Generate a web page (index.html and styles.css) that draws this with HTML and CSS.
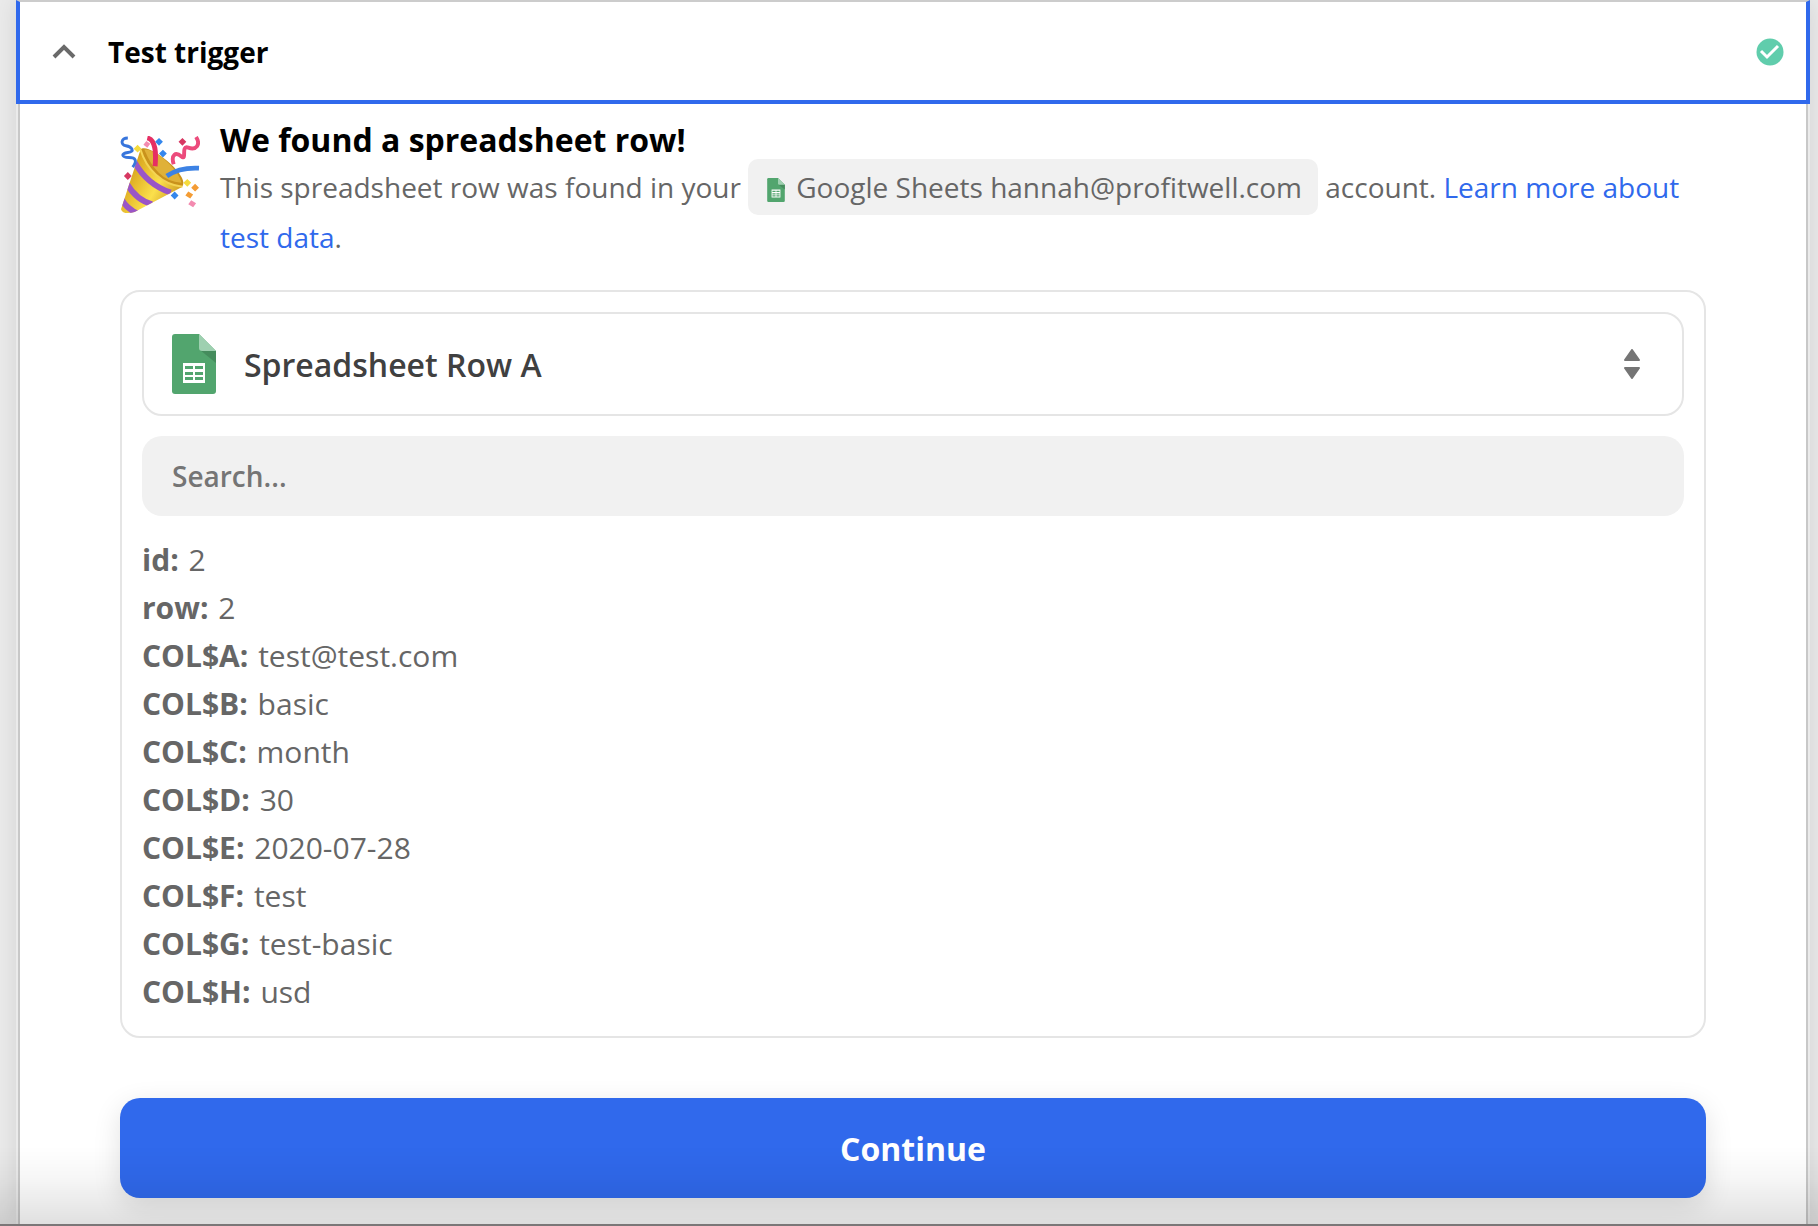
FILE: index.html
```html
<!DOCTYPE html>
<html lang="en">
<head>
    <meta charset="UTF-8">
    <meta name="viewport" content="width=device-width, initial-scale=1.0">
    <title>Test trigger</title>
    <link rel="stylesheet" href="styles.css">
</head>
<body>
    <svg class="sprite" aria-hidden="true">
        <symbol id="sheets" viewBox="0 0 44 60">
            <path fill="#52a56e" d="M3 0h24l17 17v40a3 3 0 0 1-3 3H3a3 3 0 0 1-3-3V3a3 3 0 0 1 3-3z"/>
            <path fill="#458c5d" d="M28 16l16 13V17z"/>
            <path fill="#9ed0b0" d="M27 0l17 17H30a3 3 0 0 1-3-3z"/>
            <path fill="#fff" fill-rule="evenodd" d="M11 29h22v20H11zM13 32v3h8v-3zM23 32v3h8v-3zM13 38v3h8v-3zM23 38v3h8v-3zM13 43v3h8v-3zM23 43v3h8v-3z"/>
        </symbol>
    </svg>

    <main class="step">
        <button type="button" class="step-header" aria-expanded="true">
            <svg class="chevron" viewBox="0 0 24 16"><path d="M2 13L12 3l10 10"/></svg>
            <span class="step-title">Test trigger</span>
            <svg class="check" viewBox="0 0 28 28">
                <circle cx="14" cy="14" r="13.5" fill="#60cdac"/>
                <path d="M5 13l6 6L22 8" fill="none" stroke="#fff" stroke-width="3"/>
            </svg>
        </button>

        <div class="step-body">
            <section class="found">
                <svg class="party" viewBox="0 0 80 80">
                    <defs>
                        <linearGradient id="gold" x1="0" y1="0.2" x2="1" y2="0.8">
                            <stop offset="0" stop-color="#c98d10"/>
                            <stop offset="0.35" stop-color="#e8bd2f"/>
                            <stop offset="0.6" stop-color="#fbe04c"/>
                            <stop offset="1" stop-color="#c48a18"/>
                        </linearGradient>
                        <clipPath id="cone"><path d="M20 14C26 34 42 50 63 52L14 78Q2 81 0 75Z"/></clipPath>
                    </defs>
                    <path fill="#c9921c" d="M20 14C26 6 63 34 64 48Q64 54 57 53C40 49 24 35 20 14Z"/>
                    <path fill="#e0b138" d="M24 14C34 12 59 34 62 48Q48 47 39 38T24 14Z"/>
                    <path fill="url(#gold)" d="M20 14C26 34 42 50 63 52L14 78Q2 81 0 75Z"/>
                    <g clip-path="url(#cone)" fill="none" stroke="#9a55c7" stroke-width="6">
                        <path d="M14 27Q27 50 51 58"/>
                        <path d="M6 49Q16 66 32 70"/>
                        <path d="M0 64Q6 75 18 80"/>
                    </g>
                    <path d="M20 14C26 34 42 50 63 52" fill="none" stroke="#f4d454" stroke-width="2"/>
                    <path d="M7 2C0 2-1 9 5 10S15 16 7 17 1 22 8 22 17 25 12 32" fill="none" stroke="#3775dc" stroke-width="3"/>
                    <path d="M27 2C36 4 36 18 35 31" fill="none" stroke="#e62f64" stroke-width="5"/>
                    <path d="M77 1C82 9 77 15 69 12S68 26 62 21 51 19 54 29" fill="none" stroke="#ec4b7c" stroke-width="4"/>
                    <path d="M47 41Q60 32 80 33" fill="none" stroke="#3d82e4" stroke-width="5"/>
                    <path fill="#3487ed" d="M39 2l4 4-4 4-4-4zM43 14l4 4-4 4-4-4zM55 57l4 4-4 4-4-4z"/>
                    <path fill="#f38bb0" d="M26 5l4 3-3 4-4-3zM72 66l5 3-3 4-5-3z"/>
                    <path fill="#d73862" d="M63 2l4 4-4 4-4-4zM7 37l4 4-4 4-4-4z"/>
                    <path fill="#f5db3d" d="M17 9l4 4-4 4-4-4zM68 44l4 4-4 4-4-4z"/>
                    <path fill="#f49c34" d="M76 49l4 4-4 4-4-4zM69 57l5 3-3 4-5-3z"/>
                </svg>
                <div class="found-text">
                    <h2>We found a spreadsheet row!</h2>
                    <p>This spreadsheet row was found in your <span class="account"><svg class="account-icon"><use href="#sheets"/></svg>Google Sheets hannah@profitwell.com</span> account. <a href="#">Learn more about test data</a>.</p>
                </div>
            </section>

            <section class="sample">
                <div class="picker">
                    <svg class="picker-icon"><use href="#sheets"/></svg>
                    <select aria-label="Sample row">
                        <option>Spreadsheet Row A</option>
                    </select>
                    <svg class="arrows" viewBox="0 0 16 30">
                        <path d="M8 1L15 11H1zM8 29L1 19h14z"/>
                    </svg>
                </div>
                <input type="search" class="search" placeholder="Search..." aria-label="Search">
                <dl class="fields">
                    <div><dt>id:</dt> <dd>2</dd></div>
                    <div><dt>row:</dt> <dd>2</dd></div>
                    <div><dt>COL$A:</dt> <dd>test@test.com</dd></div>
                    <div><dt>COL$B:</dt> <dd>basic</dd></div>
                    <div><dt>COL$C:</dt> <dd>month</dd></div>
                    <div><dt>COL$D:</dt> <dd>30</dd></div>
                    <div><dt>COL$E:</dt> <dd>2020-07-28</dd></div>
                    <div><dt>COL$F:</dt> <dd>test</dd></div>
                    <div><dt>COL$G:</dt> <dd>test-basic</dd></div>
                    <div><dt>COL$H:</dt> <dd>usd</dd></div>
                </dl>
            </section>

            <button type="button" class="continue">Continue</button>
        </div>
    </main>
    <div class="fade"></div>
</body>
</html>
```

FILE: styles.css
```css
* {
    box-sizing: border-box;
}

body {
    margin: 0;
    height: 100vh;
    overflow: hidden;
    padding: 0 8px 0 16px;
    font-family: "Open Sans", sans-serif;
    font-size: 28px;
    color: #666;
    background-color: #ebebeb;
}

button, input, select {
    font-family: inherit;
}

.sprite {
    display: none;
}

.step {
    min-height: 100vh;
    box-shadow: 0 0 24px rgba(0, 0, 0, 0.1);
}

.step-header {
    display: flex;
    align-items: center;
    width: 100%;
    height: 104px;
    padding: 2px 22px 0 32px;
    border: 4px solid #3069ec;
    border-top: 2px solid #ccc;
    background-color: #fff;
    color: #000;
    text-align: left;
}

.chevron {
    width: 24px;
    height: 16px;
    fill: none;
    stroke: #6a6a6a;
    stroke-width: 4;
}

.step-title {
    flex: 1;
    margin-left: 32px;
    font-size: 28px;
    font-weight: bold;
}

.check {
    width: 28px;
    height: 28px;
}

.step-body {
    min-height: calc(100vh - 104px);
    margin: 0 2px;
    padding: 16px 100px 28px;
    border: 2px solid #c8c8c8;
    border-width: 0 2px;
    background-color: #fff;
}

.found {
    display: flex;
    gap: 20px;
    margin-bottom: 28px;
}

.party {
    flex: none;
    width: 80px;
    height: 78px;
    margin-top: 16px;
}

.found h2 {
    margin: 0 0 2px;
    font-size: 32px;
    line-height: 40px;
    color: #000;
}

.found p {
    margin: 0;
    line-height: 50px;
}

.found a {
    color: #3069ec;
    text-decoration: none;
}

.account {
    padding: 9px 16px 9px 18px;
    border-radius: 10px;
    background-color: #f1f1f1;
}

.account-icon {
    width: 20px;
    height: 24px;
    margin-right: 10px;
    vertical-align: -4px;
}

.sample {
    display: flex;
    flex-direction: column;
    gap: 20px;
    margin-bottom: 60px;
    padding: 20px;
    border: 2px solid #e5e5e5;
    border-radius: 20px;
}

.picker {
    display: flex;
    align-items: center;
    height: 104px;
    padding: 0 42px 0 28px;
    border: 2px solid #e5e5e5;
    border-radius: 20px;
}

.picker-icon {
    width: 44px;
    height: 60px;
}

.picker select {
    flex: 1;
    height: 100%;
    padding: 0 28px;
    border: none;
    background: none;
    color: #404040;
    font-size: 32px;
    font-weight: 600;
    appearance: none;
}

.arrows {
    width: 16px;
    height: 30px;
    fill: #757575;
    stroke: #757575;
    stroke-width: 2;
    stroke-linejoin: round;
}

.search {
    height: 80px;
    padding: 0 30px;
    border: none;
    border-radius: 20px;
    background-color: #f1f1f1;
    font-size: 28px;
    font-weight: 600;
}

.search::placeholder {
    color: #757575;
}

.fields {
    margin: 0;
    font-size: 30px;
    line-height: 48px;
}

.fields dt, .fields dd {
    display: inline;
    margin: 0;
}

.fields dt {
    margin-right: 2px;
    font-weight: bold;
}

.continue {
    display: block;
    width: 100%;
    height: 100px;
    border: none;
    border-radius: 20px;
    background-color: #3069ec;
    box-shadow: 0 8px 28px rgba(0, 0, 0, 0.12);
    color: #fff;
    font-size: 32px;
    font-weight: bold;
}

/* darkening at the bottom edge of the window */
.fade {
    position: fixed;
    inset: auto 0 0;
    height: 80px;
    border-bottom: 2px solid #7b7778;
    background: linear-gradient(rgba(0, 0, 0, 0), rgba(0, 0, 0, 0.03) 40%, rgba(0, 0, 0, 0.12));
    pointer-events: none;
}
```
